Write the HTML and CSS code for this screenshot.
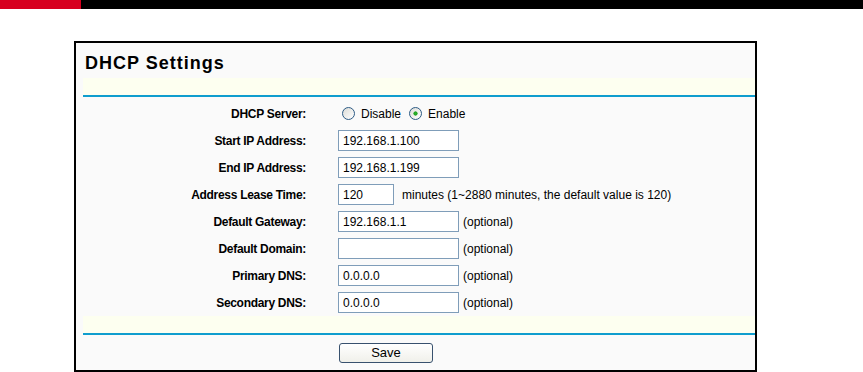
FILE: index.html
```html
<!DOCTYPE html>
<html lang="en">
<head>
    <meta charset="UTF-8">
    <title>DHCP Settings</title>
    <link rel="stylesheet" href="styles.css">
</head>
<body>
    <!-- Top brand strip -->
    <div class="topbar">
        <div class="topbar-red"></div>
        <div class="topbar-black"></div>
    </div>

    <!-- DHCP panel -->
    <div class="panel">
        <h1 class="panel-title">DHCP Settings</h1>
        <div class="band"></div>

        <form class="form" onsubmit="return false;">
            <div class="row">
                <label class="label">DHCP Server:</label>
                <div class="field">
                    <label class="radio"><input type="radio" name="dhcp" value="0"> Disable</label>
                    <label class="radio"><input type="radio" name="dhcp" value="1" checked> Enable</label>
                </div>
            </div>
            <div class="row">
                <label class="label" for="startIp">Start IP Address:</label>
                <div class="field"><input class="text" type="text" id="startIp" value="192.168.1.100"></div>
            </div>
            <div class="row">
                <label class="label" for="endIp">End IP Address:</label>
                <div class="field"><input class="text" type="text" id="endIp" value="192.168.1.199"></div>
            </div>
            <div class="row">
                <label class="label" for="lease">Address Lease Time:</label>
                <div class="field">
                    <input class="text short" type="text" id="lease" value="120">
                    <span class="hint wide">minutes (1~2880 minutes, the default value is 120)</span>
                </div>
            </div>
            <div class="row">
                <label class="label" for="gateway">Default Gateway:</label>
                <div class="field"><input class="text" type="text" id="gateway" value="192.168.1.1"><span class="hint">(optional)</span></div>
            </div>
            <div class="row">
                <label class="label" for="domain">Default Domain:</label>
                <div class="field"><input class="text" type="text" id="domain" value=""><span class="hint">(optional)</span></div>
            </div>
            <div class="row">
                <label class="label" for="dns1">Primary DNS:</label>
                <div class="field"><input class="text" type="text" id="dns1" value="0.0.0.0"><span class="hint">(optional)</span></div>
            </div>
            <div class="row">
                <label class="label" for="dns2">Secondary DNS:</label>
                <div class="field"><input class="text" type="text" id="dns2" value="0.0.0.0"><span class="hint">(optional)</span></div>
            </div>
        </form>

        <div class="band"></div>
        <div class="actions">
            <button class="button" type="button">Save</button>
        </div>
    </div>
</body>
</html>
```

FILE: styles.css
```css
/* Page */
body {
    margin: 0;
    background: #fff;
    font-family: "Liberation Sans", Arial, sans-serif;
    font-size: 12px;
    color: #000;
}

/* Brand strip */
.topbar {
    display: flex;
    height: 9px;
}

.topbar-red {
    width: 81px;
    background: #d7001f;
}

.topbar-black {
    flex: 1;
    background: #000;
}

/* Panel */
.panel {
    box-sizing: border-box;
    width: 683px;
    margin: 32px 0 0 74px;
    border: 2px solid #000;
    background: #fafafa;
}

.panel-title {
    box-sizing: border-box;
    height: 35px;
    margin: 0;
    padding: 10px 0 0 9px;
    font-size: 18px;
    line-height: 21px;
    letter-spacing: 1px;
    font-weight: bold;
}

.band {
    height: 17px;
    margin-left: 7px;
    background: #fdfff0;
    border-bottom: 2px solid #0f9dce;
}

/* Form rows */
.form {
    margin: 0;
    padding: 3px 0 0;
}

.row {
    display: flex;
    align-items: center;
    height: 27px;
}

.label {
    width: 230px;
    margin-right: 32px;
    text-align: right;
    font-weight: bold;
    letter-spacing: -0.3px;
}

.field {
    display: flex;
    align-items: center;
}

.text {
    box-sizing: border-box;
    width: 121px;
    height: 21px;
    margin: 0;
    padding: 0 4px;
    border: 1px solid #7f9db9;
    background: #fff;
    font-family: "Liberation Sans", Arial, sans-serif;
    font-size: 12px;
    color: #000;
    outline: none;
}

.text.short {
    width: 56px;
}

.hint {
    margin-left: 4px;
}

.hint.wide {
    margin-left: 8px;
}

/* Radios */
.radio {
    display: flex;
    align-items: center;
    margin-right: 8px;
}

.radio input {
    appearance: none;
    -webkit-appearance: none;
    box-sizing: border-box;
    width: 13px;
    height: 13px;
    margin: 0 6px 0 4px;
    border: 1px solid #2c5a84;
    border-radius: 50%;
    background: linear-gradient(135deg, #dcdcd7, #ffffff);
}

.radio + .radio input {
    margin-left: 0;
}

.radio input:checked {
    background: radial-gradient(circle, #2bb32b 0, #21a121 1.8px, transparent 2.4px),
                linear-gradient(135deg, #dcdcd7, #ffffff);
}

/* Save */
.actions {
    display: flex;
    align-items: center;
    height: 35px;
    padding-left: 263px;
}

.button {
    box-sizing: border-box;
    width: 94px;
    height: 20px;
    padding: 0;
    border: 1px solid #38516e;
    border-radius: 3px;
    background: linear-gradient(#ffffff, #f0f0ea);
    font-family: "Liberation Sans", Arial, sans-serif;
    font-size: 13px;
    color: #000;
}
```
